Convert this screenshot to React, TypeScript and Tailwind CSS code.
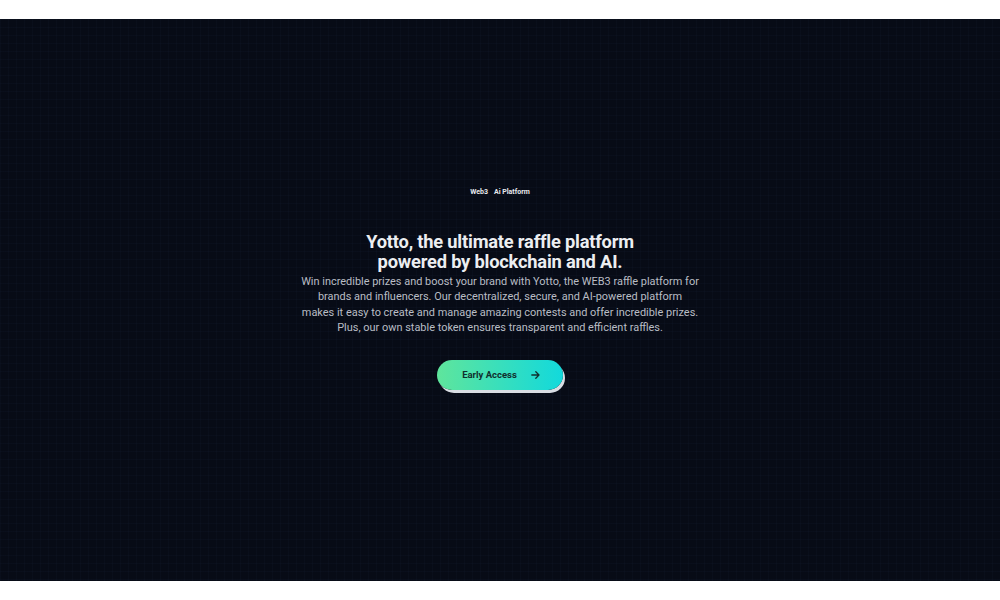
import React from "react";

export default function App() {
  return (
    <div className="w-full h-[600px] bg-white py-[19px]" style={{ fontFamily: "Roboto, 'Noto Sans', sans-serif" }}>
      <section className="h-[562px] w-full bg-[#070b16] bg-[linear-gradient(rgba(40,50,80,0.09)_1px,transparent_1px),linear-gradient(90deg,rgba(40,50,80,0.09)_1px,transparent_1px)] bg-[length:8px_8px] flex flex-col items-center pt-[168px]">
        <div className="flex gap-[6px] text-[7px] leading-[10px] font-bold text-[#e8eaee]">
          <span>Web3</span>
          <span>Ai Platform</span>
        </div>
        <h1 className="mt-[35px] text-center text-[18.3px] leading-[20px] font-bold text-[#eceef1] tracking-[-0.2px]">
          Yotto, the ultimate raffle platform
          <br />
          powered by blockchain and AI.
        </h1>
        <p className="mt-[2px] w-[440px] text-center text-[10.95px] leading-[15.3px] text-[#b9bdc5]">
          Win incredible prizes and boost your brand with Yotto, the WEB3 raffle platform for
          <br />
          brands and influencers. Our decentralized, secure, and AI-powered platform
          <br />
          makes it easy to create and manage amazing contests and offer incredible prizes.
          <br />
          Plus, our own stable token ensures transparent and efficient raffles.
        </p>
        <button className="mt-[25px] h-[30px] w-[126px] rounded-full bg-[linear-gradient(90deg,#5fe59c,#12d9dc)] shadow-[2px_3px_0_#d9dde3] flex items-center justify-center gap-[14px] pl-[2px] text-[9.5px] font-bold text-[#10302e]">
          <span>Early Access</span>
          <svg width="9" height="8" viewBox="0 0 9 8" fill="none" stroke="#10302e" strokeWidth="1.3" strokeLinecap="round" strokeLinejoin="round">
            <path d="M0.8 4H8M4.8 0.8L8 4L4.8 7.2" />
          </svg>
        </button>
      </section>
    </div>
  );
}
